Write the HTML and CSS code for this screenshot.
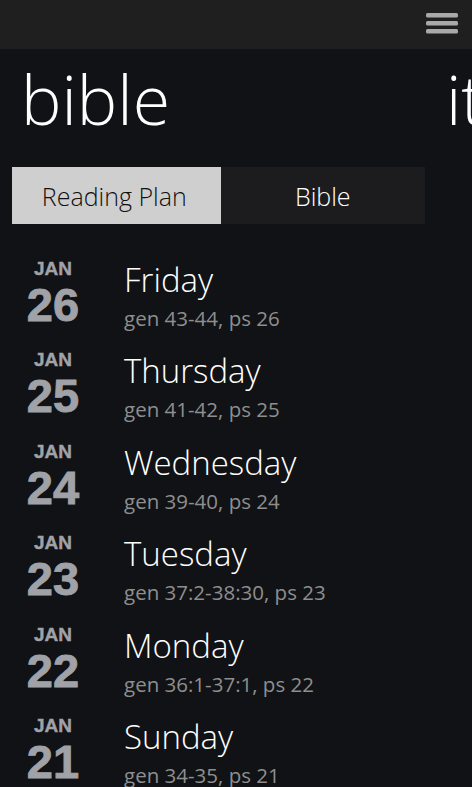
FILE: index.html
```html
<!DOCTYPE html>
<html lang="en">
<head>
    <meta charset="UTF-8">
    <meta name="viewport" content="width=device-width, initial-scale=1.0">
    <title>bible</title>
    <link rel="stylesheet" href="styles.css">
</head>
<body>

    <div id="topbar">
        <svg class="menu-icon" width="34" height="24" viewBox="0 0 34 24">
            <rect x="1" y="1" width="32" height="4.5" rx="1.5" fill="#a9a9a9"/>
            <rect x="1" y="9" width="32" height="4.5" rx="1.5" fill="#a9a9a9"/>
            <rect x="1" y="17" width="32" height="4.5" rx="1.5" fill="#a9a9a9"/>
        </svg>
    </div>

    <div id="pivot">
        <div class="pivot-headers">
            <span class="pivot-title">bible</span>
            <span class="pivot-title next">it</span>
        </div>

        <div class="tabs">
            <div class="tab active">Reading Plan</div>
            <div class="tab">Bible</div>
        </div>

        <div id="plan">
            <div class="day">
                <div class="date"><span class="month">JAN</span><span class="num">26</span></div>
                <div class="info"><div class="weekday">Friday</div><div class="reading">gen 43-44, ps 26</div></div>
            </div>
            <div class="day">
                <div class="date"><span class="month">JAN</span><span class="num">25</span></div>
                <div class="info"><div class="weekday">Thursday</div><div class="reading">gen 41-42, ps 25</div></div>
            </div>
            <div class="day">
                <div class="date"><span class="month">JAN</span><span class="num">24</span></div>
                <div class="info"><div class="weekday">Wednesday</div><div class="reading">gen 39-40, ps 24</div></div>
            </div>
            <div class="day">
                <div class="date"><span class="month">JAN</span><span class="num">23</span></div>
                <div class="info"><div class="weekday">Tuesday</div><div class="reading">gen 37:2-38:30, ps 23</div></div>
            </div>
            <div class="day">
                <div class="date"><span class="month">JAN</span><span class="num">22</span></div>
                <div class="info"><div class="weekday">Monday</div><div class="reading">gen 36:1-37:1, ps 22</div></div>
            </div>
            <div class="day">
                <div class="date"><span class="month">JAN</span><span class="num">21</span></div>
                <div class="info"><div class="weekday">Sunday</div><div class="reading">gen 34-35, ps 21</div></div>
            </div>
        </div>
    </div>

</body>
</html>
```

FILE: styles.css
```css
body {
    font-family: 'Open Sans', 'Noto Sans', sans-serif;
    background-color: #111215;
    color: #fff;
    margin: 0;
    height: 787px;
    overflow: hidden;
}

#topbar {
    height: 49px;
    background-color: #1f1f1f;
    display: flex;
    justify-content: flex-end;
    align-items: flex-start;
}

.menu-icon {
    margin-top: 12px;
    margin-right: 13px;
}

.pivot-headers {
    display: flex;
    height: 118px;
    overflow: hidden;
    white-space: nowrap;
}

.pivot-title {
    font-weight: 300;
    font-size: 68px;
    line-height: 1;
    margin-top: 16px;
    padding-left: 21px;
    width: 404px;
    flex-shrink: 0;
}

.pivot-title.next {
    padding-left: 21px;
}

.tabs {
    display: flex;
    margin-left: 12px;
    width: 413px;
    height: 57px;
}

.tab {
    flex: 1;
    display: flex;
    align-items: center;
    justify-content: center;
    background-color: #1c1c1f;
    font-size: 25px;
    font-weight: 300;
    color: #fff;
}

.tab.active {
    background-color: #cfcfcf;
    color: #111;
    padding-right: 4px;
}

#plan {
    margin-top: 33px;
}

.day {
    display: flex;
    height: 91.4px;
}

.date {
    width: 106px;
    display: flex;
    flex-direction: column;
    align-items: center;
    font-family: 'Liberation Sans', Arial, sans-serif;
    font-weight: bold;
    color: #a0a2a8;
    -webkit-text-stroke: 0.9px #a0a2a8;
}

.month {
    font-size: 19px;
    line-height: 19px;
    margin-top: 2px;
    -webkit-text-stroke: 0.4px #a0a2a8;
}

.num {
    font-size: 47px;
    line-height: 47px;
    margin-top: 3px;
}

.info {
    margin-left: 18px;
}

.weekday {
    font-weight: 300;
    font-size: 33px;
    line-height: 38px;
    margin-top: 4px;
}

.reading {
    font-size: 20.5px;
    line-height: 24px;
    margin-top: 7px;
    color: #8e8e8e;
}
```
